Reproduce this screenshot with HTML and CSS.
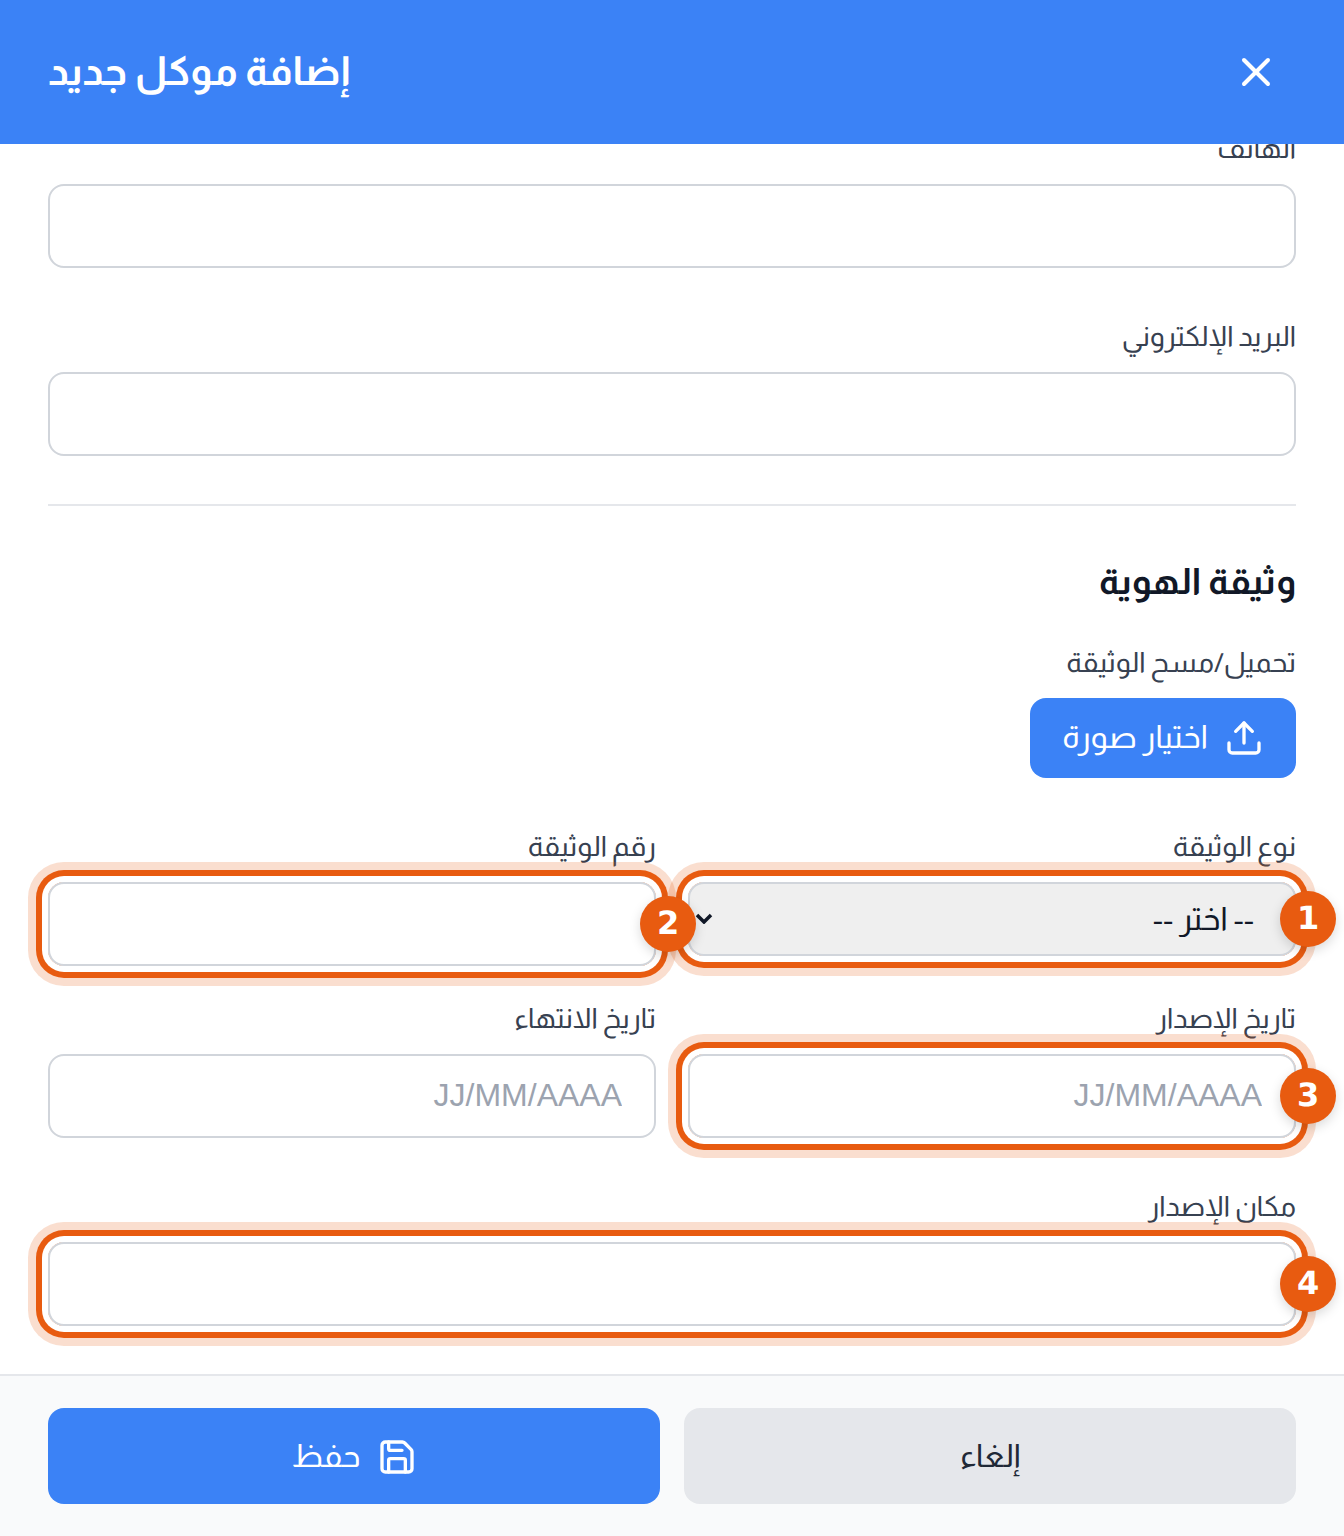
FILE: index.html
```html
<!DOCTYPE html>
<html lang="ar" dir="rtl">
<head>
  <meta charset="UTF-8">
  <meta name="viewport" content="width=device-width, initial-scale=1.0">
  <title>إضافة موكل جديد</title>
  <link rel="stylesheet" href="styles.css">
</head>
<body>
  <div class="modal">
    <header class="modal-header" dir="ltr">
      <h1 class="modal-title">إضافة موكل جديد</h1>
      <button class="close-btn" type="button" aria-label="إغلاق">
        <svg class="icon-close" viewBox="0 0 24 24"><path d="M18 6 6 18"/><path d="m6 6 12 12"/></svg>
      </button>
    </header>

    <div class="modal-body">
      <form class="form">
        <div class="field">
          <label class="label">الهاتف</label>
          <input class="input" type="text">
        </div>
        <div class="field">
          <label class="label">البريد الإلكتروني</label>
          <input class="input" type="text">
        </div>

        <section class="identity">
          <h2 class="section-title">وثيقة الهوية</h2>

          <div class="upload">
            <label class="label">تحميل/مسح الوثيقة</label>
            <button class="upload-btn" type="button">
              <svg class="icon" viewBox="0 0 24 24"><path d="M21 15v4a2 2 0 0 1-2 2H5a2 2 0 0 1-2-2v-4"/><polyline points="17 8 12 3 7 8"/><line x1="12" y1="3" x2="12" y2="15"/></svg>
              <span>اختيار صورة</span>
            </button>
          </div>

          <div class="grid grid-first">
            <div class="field">
              <label class="label">نوع الوثيقة</label>
              <div class="spot">
                <select class="select"><option>-- اختر --</option></select>
                <svg class="select-arrow" viewBox="0 0 18 11"><path d="M2 2l7 7 7-7"/></svg>
                <span class="badge">1</span>
              </div>
            </div>
            <div class="field">
              <label class="label">رقم الوثيقة</label>
              <div class="spot">
                <input class="input" type="text">
                <span class="badge">2</span>
              </div>
            </div>
          </div>

          <div class="grid grid-dates">
            <div class="field">
              <label class="label">تاريخ الإصدار</label>
              <div class="spot">
                <input class="input" type="text" placeholder="JJ/MM/AAAA">
                <span class="badge">3</span>
              </div>
            </div>
            <div class="field">
              <label class="label">تاريخ الانتهاء</label>
              <input class="input" type="text" placeholder="JJ/MM/AAAA">
            </div>
          </div>

          <div class="field field-last">
            <label class="label">مكان الإصدار</label>
            <div class="spot">
              <input class="input" type="text">
              <span class="badge">4</span>
            </div>
          </div>
        </section>
      </form>
    </div>

    <footer class="modal-footer">
      <button class="btn btn-cancel" type="button">إلغاء</button>
      <button class="btn btn-save" type="button">
        <svg class="icon" viewBox="0 0 24 24"><path d="M15.2 3a2 2 0 0 1 1.4.6l3.8 3.8a2 2 0 0 1 .6 1.4V19a2 2 0 0 1-2 2H5a2 2 0 0 1-2-2V5a2 2 0 0 1 2-2z"/><path d="M17 21v-7a1 1 0 0 0-1-1H8a1 1 0 0 0-1 1v7"/><path d="M7 3v4a1 1 0 0 0 1 1h7"/></svg>
        <span>حفظ</span>
      </button>
    </footer>
  </div>
</body>
</html>
```

FILE: styles.css
```css
* {
  box-sizing: border-box;
}

body {
  margin: 0;
  background: #fff;
  font-family: Almarai, "Noto Sans", sans-serif;
  text-rendering: geometricPrecision;
}

.modal {
  display: flex;
  flex-direction: column;
  height: 1536px;
  overflow: hidden;
}

/** Header **/

.modal-header {
  display: flex;
  align-items: center;
  justify-content: space-between;
  flex: none;
  height: 144px;
  padding: 0 48px;
  background: #3b82f6;
  color: #fff;
}

.modal-title {
  margin: 0;
  font-size: 40.3px;
  line-height: 56px;
  font-weight: 700;
}

.close-btn {
  display: flex;
  padding: 16px;
  border: 0;
  background: none;
  color: #fff;
}

.icon-close {
  width: 48px;
  height: 48px;
  fill: none;
  stroke: currentColor;
  stroke-width: 2;
  stroke-linecap: round;
  stroke-linejoin: round;
}

.icon {
  flex: none;
  width: 40px;
  height: 40px;
  fill: none;
  stroke: currentColor;
  stroke-width: 2;
  stroke-linecap: round;
  stroke-linejoin: round;
}

/** Form **/

.modal-body {
  flex: 1;
  min-height: 0;
  overflow: hidden;
  padding: 0 48px;
}

.form {
  display: flex;
  flex-direction: column;
  gap: 48px;
  margin-top: -16px;
}

.label {
  display: block;
  margin-bottom: 14px;
  font-size: 28px;
  line-height: 42px;
  color: #374151;
}

.input,
.select {
  display: block;
  width: 100%;
  border: 2px solid #d1d5db;
  border-radius: 16px;
  font-size: 32px;
  color: #111827;
}

.input {
  height: 84px;
  padding: 0 32px 2px;
  background: #fff;
  font-family: "Liberation Sans", sans-serif;
}

.input::placeholder {
  color: #9ca3af;
  opacity: 1;
}

.select {
  height: 74px;
  padding: 0 40px;
  background-color: #efefef;
  font-family: inherit;
  appearance: none;
}

.select-arrow {
  position: absolute;
  top: 31px;
  left: 7px;
  width: 18px;
  height: 11px;
  fill: none;
  stroke: #111827;
  stroke-width: 3.5;
}

.identity {
  padding-top: 48px;
  border-top: 2px solid #e5e7eb;
}

.section-title {
  margin: 0 0 32px;
  font-size: 36.4px;
  line-height: 56px;
  font-weight: 700;
  color: #111827;
}

.upload-btn {
  display: inline-flex;
  align-items: center;
  gap: 16px;
  height: 80px;
  padding: 0 32px 2px;
  border: 0;
  border-radius: 16px;
  background: #3b82f6;
  color: #fff;
  font-family: inherit;
  font-size: 32px;
}

.upload-btn .icon {
  margin-bottom: -2px;
}

.grid {
  display: grid;
  grid-template-columns: 1fr 1fr;
  gap: 32px;
  align-items: start;
}

.grid-first {
  margin-top: 48px;
}

.grid-dates {
  margin-top: 32px;
}

.field-last {
  margin-top: 48px;
}

/** Tour highlight **/

.spot {
  position: relative;
  border-radius: 16px;
  box-shadow: 0 0 0 6px #fff, 0 0 0 12px #e85b10, 0 0 0 20px rgba(232, 91, 16, 0.2);
}

.badge {
  position: absolute;
  top: 50%;
  right: -40px;
  display: flex;
  align-items: center;
  justify-content: center;
  width: 56px;
  height: 56px;
  margin-top: -28px;
  padding-bottom: 2px;
  border-radius: 50%;
  background: #e85b10;
  color: #fff;
  font-family: "DejaVu Sans", sans-serif;
  font-size: 32px;
  font-weight: 700;
  box-shadow: 0 4px 12px rgba(0, 0, 0, 0.15);
}

/** Footer **/

.modal-footer {
  display: grid;
  grid-template-columns: 1fr 1fr;
  gap: 24px;
  flex: none;
  height: 162px;
  padding: 32px 48px;
  border-top: 2px solid #e5e7eb;
  background: #f9fafb;
}

.btn {
  display: flex;
  align-items: center;
  justify-content: center;
  gap: 16px;
  height: 96px;
  padding-bottom: 2px;
  border: 0;
  border-radius: 16px;
  font-family: inherit;
  font-size: 32px;
}

.btn .icon {
  margin-bottom: -2px;
}

.btn-cancel {
  background: #e5e7eb;
  color: #1f2937;
}

.btn-save {
  background: #3b82f6;
  color: #fff;
}
```
